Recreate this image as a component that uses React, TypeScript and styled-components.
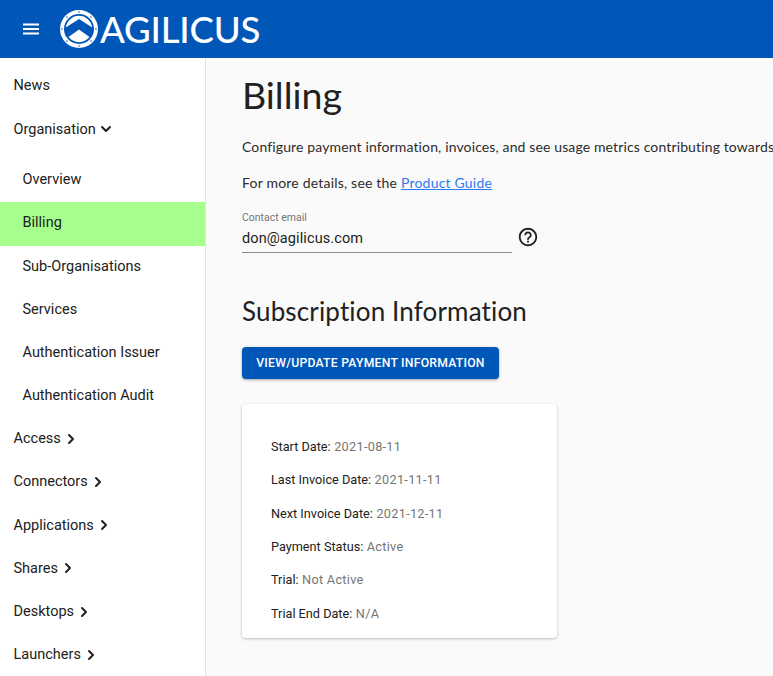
import styled, { createGlobalStyle } from "styled-components";
import { ChevronDown, ChevronRight } from "lucide-react";

const GlobalStyle = createGlobalStyle`
	html, body {
		margin: 0;
		height: 100%;
		overflow: hidden;
		background: #fafafa;
	}
	* {
		box-sizing: border-box;
	}
`

const Page = styled.div`
	width: 773px;
	height: 676px;
	display: flex;
	flex-direction: column;
	overflow: hidden;
	font-family: Roboto, "Liberation Sans", sans-serif;
`

const TopBar = styled.header`
	height: 58px;
	flex: none;
	background: #0057b8;
	display: flex;
	align-items: center;
	padding-left: 22px;
	gap: 19px;
	color: #fff;
`

const MenuIcon = styled.svg`
	width: 18px;
	height: 12px;
	flex: none;
`

const Brand = styled.div`
	display: flex;
	align-items: center;
	gap: 1px;
`

const BrandName = styled.span`
	font-family: Lato, "Liberation Sans", sans-serif;
	font-size: 36.6px;
	font-weight: 500;
	letter-spacing: -0.2px;
	line-height: 1;
	color: #fff;
`

const Body = styled.div`
	flex: 1;
	display: flex;
	min-height: 0;
`

const Sidebar = styled.nav`
	width: 206px;
	flex: none;
	background: #fff;
	border-right: 1px solid #e2e2e2;
	padding-top: 7.5px;
	overflow: hidden;
`

const NavRow = styled.div<{ $child?: boolean; $active?: boolean }>`
	height: 43.2px;
	display: flex;
	align-items: center;
	gap: 2px;
	padding-left: ${(p) => (p.$child ? "22.5px" : "13.5px")};
	padding-bottom: 2.4px;
	font-size: 14.5px;
	color: #212121;
	background: ${(p) => (p.$active ? "#a6ff8c" : "transparent")};
`

const SubList = styled.div`
	margin-top: 7.4px;
`

const Main = styled.main`
	flex: 1;
	min-width: 0;
	padding: 16px 0 0 36px;
	overflow: hidden;
`

const Title = styled.h1`
	margin: 0;
	font-family: Lato, "Liberation Sans", sans-serif;
	font-size: 37.5px;
	font-weight: 400;
	line-height: 42px;
	color: #212121;
`

const Paragraph = styled.p`
	margin: 0;
	font-family: Lato, "Liberation Sans", sans-serif;
	font-size: 14px;
	line-height: 20px;
	white-space: nowrap;
	color: #2c2c2c;
`

const Intro = styled(Paragraph)`
	margin-top: 21px;
	letter-spacing: 0.13px;
`

const Details = styled(Paragraph)`
	margin-top: 16px;
	letter-spacing: 0.2px;
`

const GuideLink = styled.a`
	color: #2f7bf0;
	text-decoration: underline;
`

const FieldRow = styled.div`
	margin-top: 15px;
	display: flex;
	align-items: center;
	gap: 5px;
`

const Field = styled.div`
	width: 270px;
	border-bottom: 1px solid #8c8c8c;
	height: 45px;
`

const FieldLabel = styled.div`
	font-size: 10.5px;
	line-height: 13px;
	color: #757575;
	padding-top: 3px;
`

const FieldValue = styled.div`
	font-size: 14.5px;
	line-height: 24px;
	letter-spacing: 0.1px;
	padding-top: 3px;
	color: #212121;
`

const HelpIcon = styled.svg`
	width: 22px;
	height: 22px;
	flex: none;
	margin-top: 13px;
`

const SectionTitle = styled.h2`
	margin: 41px 0 0;
	font-family: Lato, "Liberation Sans", sans-serif;
	font-size: 26px;
	font-weight: 400;
	letter-spacing: 0.15px;
	line-height: 34px;
	color: #212121;
`

const PrimaryButton = styled.button`
	display: block;
	margin-top: 19px;
	width: 257px;
	height: 32px;
	border: 0;
	border-radius: 4px;
	padding: 0;
	background: #0057b8;
	color: #fff;
	font-family: inherit;
	font-size: 12.2px;
	font-weight: 500;
	letter-spacing: 0.25px;
	box-shadow: 0 1px 3px rgba(0, 0, 0, 0.35);
`

const Card = styled.section`
	margin-top: 25px;
	width: 315px;
	height: 234px;
	background: #fff;
	border-radius: 4px;
	box-shadow: 0 1px 3px rgba(0, 0, 0, 0.25);
	padding: 26px 0 0 29px;
`

const InfoRow = styled.div`
	height: 33.3px;
	display: flex;
	align-items: center;
	gap: 3.5px;
	font-size: 12.7px;
	color: #212121;
`

const InfoValue = styled.span`
	color: #757575;
	letter-spacing: 0.3px;
`

const orgChildren = ["Overview", "Billing", "Sub-Organisations", "Services", "Authentication Issuer", "Authentication Audit"];
const otherItems = ["Access", "Connectors", "Applications", "Shares", "Desktops", "Launchers"];
const info = [
	["Start Date:", "2021-08-11"],
	["Last Invoice Date:", "2021-11-11"],
	["Next Invoice Date:", "2021-12-11"],
	["Payment Status:", "Active"],
	["Trial:", "Not Active"],
	["Trial End Date:", "N/A"],
];
const logoDots = [0, 45, 90, 135, 180, 225, 270, 315];

function Logo() {
	return (
		<svg width="40" height="40" viewBox="0 0 40 40">
			<circle cx="20" cy="20" r="19" fill="#fff" />
			{logoDots.map((angle) => (
				<circle
					key={angle}
					cx={20 + 17 * Math.sin((angle * Math.PI) / 180)}
					cy={20 - 17 * Math.cos((angle * Math.PI) / 180)}
					r="0.8"
					fill="#0057b8"
				/>
			))}
			<circle cx="20" cy="20" r="15" fill="#0057b8" />
			<path d="M6.8 18.5 A13.3 13.3 0 0 1 33.2 18.5 L20 10 Z" fill="#fff" />
			<path d="M9.5 28 L20 20.5 L30.5 28 A13.3 13.3 0 0 1 9.5 28 Z" fill="#fff" />
		</svg>
	);
}

export default function App() {
	return (
		<Page>
			<GlobalStyle />
			<TopBar>
				<MenuIcon viewBox="0 0 18 12">
					<path d="M1 1.5h16M1 6h16M1 10.5h16" stroke="#fff" strokeWidth="1.8" />
				</MenuIcon>
				<Brand>
					<Logo />
					<BrandName>AGILICUS</BrandName>
				</Brand>
			</TopBar>
			<Body>
				<Sidebar>
					<NavRow>News</NavRow>
					<NavRow>
						Organisation
						<ChevronDown size={16} strokeWidth={3} />
					</NavRow>
					<SubList>
						{orgChildren.map((item) => (
							<NavRow key={item} $child $active={item === "Billing"}>
								{item}
							</NavRow>
						))}
					</SubList>
					{otherItems.map((item) => (
						<NavRow key={item}>
							{item}
							<ChevronRight size={16} strokeWidth={3} />
						</NavRow>
					))}
				</Sidebar>
				<Main>
					<Title>Billing</Title>
					<Intro>Configure payment information, invoices, and see usage metrics contributing towards</Intro>
					<Details>
						For more details, see the <GuideLink href="#">Product Guide</GuideLink>
					</Details>
					<FieldRow>
						<Field>
							<FieldLabel>Contact email</FieldLabel>
							<FieldValue>don@agilicus.com</FieldValue>
						</Field>
						<HelpIcon viewBox="0 0 24 24">
							<path
								fill="#212121"
								d="M11 18h2v-2h-2v2zm1-16C6.48 2 2 6.48 2 12s4.48 10 10 10 10-4.48 10-10S17.52 2 12 2zm0 18c-4.41 0-8-3.59-8-8s3.59-8 8-8 8 3.59 8 8-3.59 8-8 8zm0-14c-2.21 0-4 1.79-4 4h2c0-1.1.9-2 2-2s2 .9 2 2c0 2-3 1.75-3 5h2c0-2.25 3-2.5 3-5 0-2.21-1.79-4-4-4z"
							/>
						</HelpIcon>
					</FieldRow>
					<SectionTitle>Subscription Information</SectionTitle>
					<PrimaryButton>VIEW/UPDATE PAYMENT INFORMATION</PrimaryButton>
					<Card>
						{info.map(([label, value]) => (
							<InfoRow key={label}>
								{label}
								<InfoValue>{value}</InfoValue>
							</InfoRow>
						))}
					</Card>
				</Main>
			</Body>
		</Page>
	);
}
